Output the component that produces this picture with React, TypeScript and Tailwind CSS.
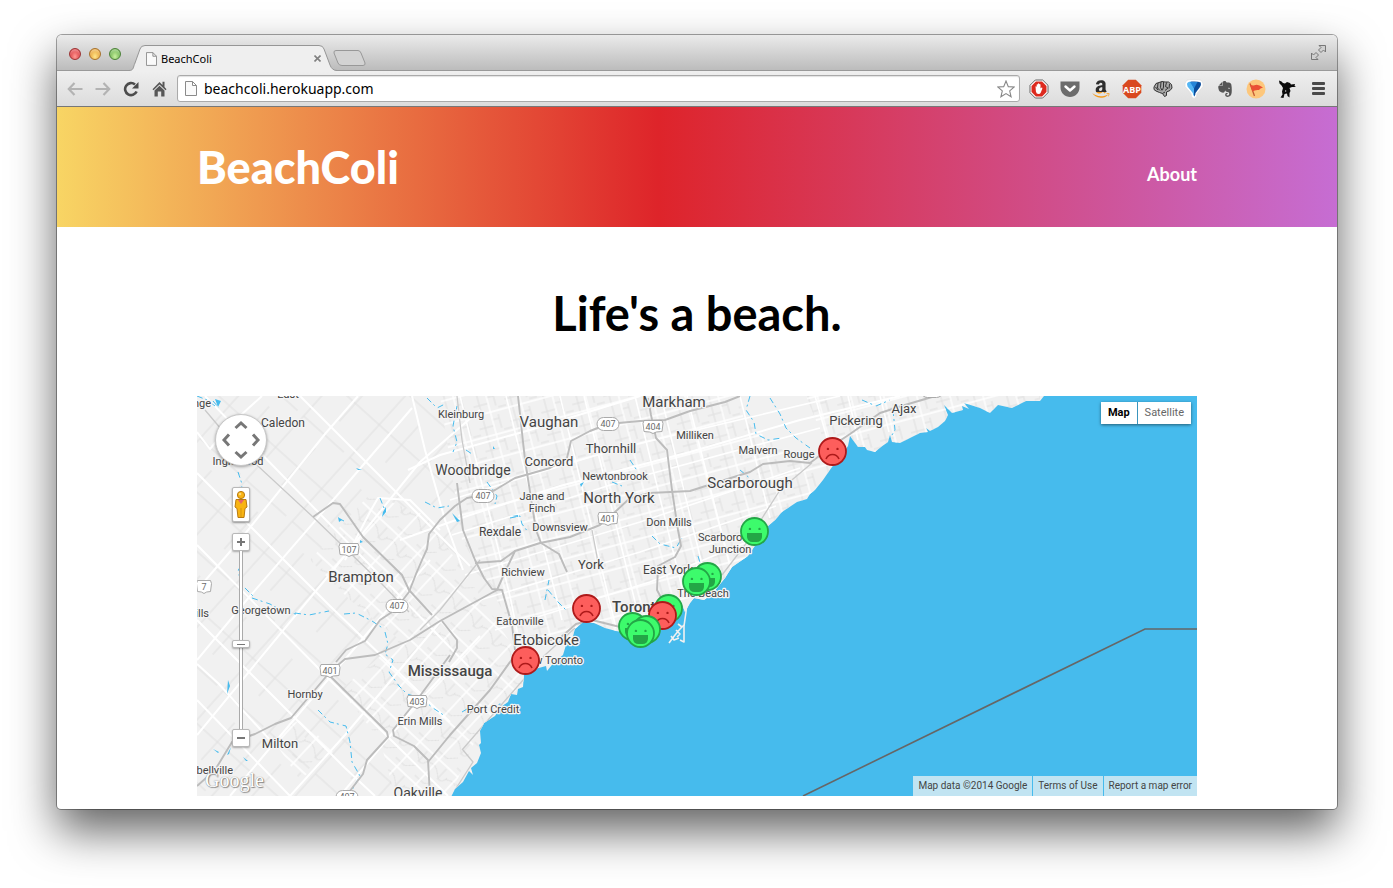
import React from "react";
import { FaAmazon } from "react-icons/fa";
import { SiEvernote } from "react-icons/si";

/* ---------- Map data ---------- */

const COAST =
  "M190 390H1046L1044 396L1040 401L1026 401L1012 408L998 405L990 413L980 408L964 403L969 409L962 406L963 410L952 413L944 405L948 415L945 421L938 427L930 431L926 428L928 432L920 433L910 438L900 443L892 442L890 435L888 442L881 447L875 452L867 450L865 447L858 447L850 436L848 446L840 458L832 467L823 480L815 490L810 494L807 499L797 502L782 512L775 520L768 526L758 541L752 550L748 556L732 567L725 578L712 594L704 600L694 598L690 603L685 612L682 604L674 622L662 627L650 632L634 634L616 631L605 628L594 623L583 622L575 629L573 636L572 642L566 645L563 655L555 661L547 671L546 666L535 669L524 674L523 687L518 689L517 695L511 694L508 702L501 707L495 716L484 723L480 731L481 743L479 745L481 753L477 763L471 768L473 775L469 771L463 782L455 789L451 797H190Z";

const RURAL = [
  "M205 396L400 596L470 668",
  "M197 432L210 449L230 425L262 396",
  "M300 396L470 566",
  "M197 473L330 606L450 722",
  "M197 545L330 680L448 796",
  "M197 620L345 768L375 796",
  "M197 700L290 796",
  "M197 590L240 540L325 434L358 396",
  "M197 660L245 602L340 492L412 408",
  "M197 735L290 622L330 574L420 462L480 410",
  "M230 796L270 748L370 630L430 560",
  "M290 796L345 735L440 622",
  "M340 796L420 700L480 636",
  "M412 396L425 450L445 520L463 570",
  "M408 470L440 455L530 430L640 396",
  "M400 540L470 515L560 486L690 452L800 420L900 396",
  "M197 664L218 683L270 740",
  "M345 560L371 510L378 498L410 500L440 530",
];

const CITY_LINES = [
  "M460 396L510 596L520 645",
  "M506 396L562 620",
  "M560 396L616 628",
  "M584 396L640 622",
  "M635 396L684 596",
  "M661 396L707 585",
  "M687 396L730 566",
  "M740 396L770 518",
  "M815 396L829 445",
  "M848 396L858 440",
  "M880 396L889 432",
  "M450 500L620 448L840 396",
  "M452 535L620 482L820 428",
  "M465 575L640 522L800 468",
  "M480 600L640 552L776 506",
  "M495 630L650 582L752 540",
];

const ROADS = [
  "M205 410L232 442L313 517L380 582L409 612",
  "M457 396L462 440L470 483",
  "M592 530L598 562",
  "M722 575L745 545L780 490L812 463",
  "M480 560L440 610L420 630",
  "M463 750L473 762L455 790",
  "M462 750L495 712L545 655L575 628",
];

const HIGHWAYS = [
  "M313 517L333 503L340 504L363 537L402 575L409 590L432 615",
  "M336 662L346 650L365 641L380 620L395 610L409 592L416 574L422 560L427 549L429 534L440 520L455 506L467 498L483 495L495 490L515 478L550 468L567 458L571 441L590 431L608 424L640 421L665 420L690 411L725 402L740 396",
  "M197 786L215 770L232 742L255 734L275 724L291 718L330 672L345 659L375 655L410 640L440 621L497 590L505 572L515 551L540 543L570 537L600 525L615 512L630 498L650 493L690 491L718 482L750 472L763 464L790 461L810 463L832 446L850 434L880 413L905 405L932 397",
  "M330 676L387 732L388 737L367 760L363 774L346 796",
  "M450 655L417 700L393 730L394 736L414 746L428 760L430 796",
  "M428 762L450 735L490 690L515 655L535 643L560 638L576 624L592 620L620 627L640 618L668 612",
  "M518 396L525 460L536 530L541 543L559 554L567 572",
  "M457 483L463 530L475 560L484 578L492 589L502 590L512 625L515 650",
  "M475 563L501 561L515 551",
  "M442 621L457 640L457 648L449 662",
  "M648 398L651 415L656 438L667 450L672 490L678 530L681 546L675 557L658 566L657 590L665 605",
];

const CREEKS = [
  "M197 396l10 4 8 6M213 401l6 7M238 472l4 12-1 10M241 560l-3 12 5 14 10 10M252 598l18 6 14 8 12 2M295 613l14 2 20 -4M344 614l12-1 16 8 12 8M385 632l3 12-3 10 8 6-4 12 10 14 8 8 14 4 12 10 12 8M318 710l12 12 16 4 4 16 2 20 8 14-8 14-14 6",
  "M427 398l10 10 8-4M457 406l-4 20 4 16-4 10M425 502l12 6 12-2M466 450l6 4M487 482l10 14-2 8M510 518l10-2 2 8 6 8M545 600l4-20M548 590l10 12 10 10M462 712l10-6 16 2 12-4 10 2",
  "M750 396l-4 14 8 12 2 12 12 6 14-2M770 398l10 16 6 14 10 10 14 10M862 400l14 6 14-6M893 410l2 20-6 10M740 470l12 10 16 4M652 536l8 8 16 4 6-10M612 482l10 4M698 556l6 20M630 460l8 12",
  "M380 498l4 10M340 519l4 2",
];

type Anchor = "start" | "middle" | "end";
const LABELS: [string, number, number, number, Anchor, number?][] = [
  ["Markham", 674, 407, 15, "middle"],
  ["Kleinburg", 461, 418, 11, "middle"],
  ["Vaughan", 549, 427, 15, "middle"],
  ["Caledon", 283, 427, 12, "middle"],
  ["East", 288, 398, 11, "middle"],
  ["Orange", 211, 407, 11, "end"],
  ["Inglewood", 238, 465, 11, "middle"],
  ["Thornhill", 611, 453, 13, "middle"],
  ["Concord", 549, 466, 13, "middle"],
  ["Woodbridge", 473, 475, 14, "middle"],
  ["Newtonbrook", 615, 480, 11, "middle"],
  ["Jane and", 542, 500, 11, "middle"],
  ["Finch", 542, 512, 11, "middle"],
  ["North York", 619, 503, 15, "middle"],
  ["Milliken", 695, 439, 11, "middle"],
  ["Malvern", 758, 454, 11, "middle"],
  ["Rouge", 799, 458, 11, "middle"],
  ["Pickering", 856, 425, 13, "middle"],
  ["Ajax", 904, 413, 13, "middle"],
  ["Scarborough", 750, 488, 15, "middle"],
  ["Don Mills", 669, 526, 11, "middle"],
  ["Rexdale", 500, 536, 12, "middle"],
  ["Downsview", 560, 531, 11, "middle"],
  ["Scarborough", 698, 541, 11, "start"],
  ["Junction", 730, 553, 11, "middle"],
  ["York", 591, 569, 13, "middle"],
  ["East York", 643, 574, 12, "start"],
  ["Richview", 523, 576, 11, "middle"],
  ["The Beach", 703, 597, 11, "middle"],
  ["Toronto", 612, 612, 15, "start", 500],
  ["Eatonville", 520, 625, 11, "middle"],
  ["Etobicoke", 546, 645, 15, "middle"],
  ["New Toronto", 583, 664, 11, "end"],
  ["Mississauga", 450, 676, 15, "middle", 500],
  ["Port Credit", 493, 713, 11, "middle"],
  ["Erin Mills", 420, 725, 11, "middle"],
  ["Hornby", 305, 698, 11, "middle"],
  ["Milton", 280, 748, 13, "middle"],
  ["Brampton", 361, 582, 15, "middle"],
  ["Georgetown", 261, 614, 11, "middle"],
  ["Hills", 209, 617, 11, "end"],
  ["Campbellville", 233, 774, 11, "end"],
  ["Oakville", 418, 798, 14, "middle"],
];

const SHIELDS: [string, number, number, boolean][] = [
  ["407", 608, 424, true],
  ["404", 653, 427, false],
  ["407", 483, 496, true],
  ["401", 608, 519, false],
  ["107", 349, 550, false],
  ["7", 204, 587, false],
  ["407", 397, 606, true],
  ["401", 330, 671, false],
  ["403", 417, 702, false],
  ["407", 347, 797, true],
  ["2", 932, 391, true],
];

const MARKERS: [number, number, boolean][] = [
  [832, 451, false],
  [754, 531, true],
  [707, 576, true],
  [696, 581, true],
  [586, 608, false],
  [668, 608, true],
  [662, 615, false],
  [632, 626, true],
  [646, 629, true],
  [640, 633, true],
  [525, 660, false],
];

function Marker({ x, y, happy }: { x: number; y: number; happy: boolean }) {
  const dark = happy ? "#23a646" : "#ae1a1a";
  return (
    <g transform={`translate(${x + 0.5} ${y + 0.5})`}>
      <circle r="13.5" fill={happy ? "#3dfb6c" : "#fd5e5c"} stroke={dark} strokeWidth="1.8" />
      <circle cx="-4.6" cy="-2.6" r="1.2" fill={dark} />
      <circle cx="5" cy="-2.6" r="1.2" fill={dark} />
      {happy ? (
        <path d="M-7.5 1.5H7.5V5.5Q7 10.5 2 10.5H-2Q-7 10.5-7.5 5.5Z" fill={dark} />
      ) : (
        <path d="M-6.5 7.5Q-4.5 3 0 3T6.5 7.5" fill="none" stroke={dark} strokeWidth="1.6" />
      )}
    </g>
  );
}

function Shield({ text, x, y, round }: { text: string; x: number; y: number; round: boolean }) {
  const w = round ? 22 : text.length > 1 ? 18 : 13;
  return (
    <g>
      {round ? (
        <rect x={x - w / 2} y={y - 6.5} width={w} height="13" rx="6.5" fill="#fff" stroke="#aaa" />
      ) : (
        <path
          d={`M${x - w / 2} ${y - 6.5}h${w}l1 3l-1 8q-${w / 2 - 2} 0-${w / 2} 2q-2-2-${w / 2}-2l-1-8z`}
          fill="#fff"
          stroke="#aaa"
        />
      )}
      <text x={x} y={y + 3} textAnchor="middle" fontSize="9" fill="#6b6b6b">
        {text}
      </text>
    </g>
  );
}

function MapCanvas() {
  return (
    <svg
      className="block h-full w-full"
      viewBox="197 396 1000 400"
      preserveAspectRatio="xMidYMid slice"
      fontFamily="Roboto, sans-serif"
      role="img"
      aria-label="Map of Toronto beaches"
    >
      <defs>
        <clipPath id="land">
          <path d={COAST} />
        </clipPath>
        <pattern id="rural" width="86" height="62" patternUnits="userSpaceOnUse" patternTransform="rotate(-48)">
          <path d="M0 8H86M24 0V62M0 38H50M66 8V62" fill="none" stroke="#e0e0e0" strokeWidth="1" />
        </pattern>
        <pattern id="suburb" width="34" height="26" patternUnits="userSpaceOnUse" patternTransform="rotate(-47)">
          <path d="M6 0Q12 8 4 16T8 26M22 0V12L30 20M0 19H14" fill="none" stroke="#e0e0e0" strokeWidth="1" />
          <path d="M0 7H34M16 0V26" fill="none" stroke="#fff" strokeWidth="1.6" />
        </pattern>
        <pattern id="city" width="32" height="23" patternUnits="userSpaceOnUse" patternTransform="rotate(-15)">
          <path d="M6 0V23M22 0V14M0 10H15M24 16H32M15 4H22" fill="none" stroke="#dfdfdf" strokeWidth="1" />
          <path d="M0 19H32M15 0V23" fill="none" stroke="#fff" strokeWidth="1.3" />
        </pattern>
      </defs>
      <rect x="197" y="396" width="1000" height="400" fill="#46bbed" />
      <g clipPath="url(#land)">
        <rect x="197" y="396" width="860" height="400" fill="#f1f1f1" />
        <rect x="197" y="396" width="300" height="400" fill="url(#rural)" />
        <path
          d="M370 494L425 515L470 580L515 650L525 680L480 730L450 796H395L380 740L340 690L400 640L350 600L310 560Z"
          fill="#f1f1f1"
        />
        <path
          d="M370 494L425 515L470 580L515 650L525 680L480 730L450 796H395L380 740L340 690L400 640L350 600L310 560Z"
          fill="url(#suburb)"
        />
        <path d="M270 735L300 720L335 750L300 780Z" fill="url(#suburb)" />
        <path d="M440 396H740L780 520L690 620H520L462 540Z" fill="#f1f1f1" />
        <path d="M440 396H1040V440L880 450L780 520L690 640H520L462 540Z" fill="url(#city)" />
        <path d="M738 396H806L828 450L790 456L744 420Z" fill="#f1f1f1" />
        <g fill="none" stroke="#fff" strokeWidth="2" strokeLinejoin="round">
          {RURAL.map((d) => (
            <path key={d} d={d} />
          ))}
        </g>
        <g fill="none" stroke="#fff" strokeWidth="1.6">
          {CITY_LINES.map((d) => (
            <path key={d} d={d} />
          ))}
        </g>
        <g fill="none" stroke="#46bbed" strokeWidth="1" strokeDasharray="6 3 2 4">
          {CREEKS.map((d) => (
            <path key={d} d={d} />
          ))}
        </g>
        <g fill="#46bbed">
          <path d="M383 512l3-5v5l-4 5zM338 517l4 3-3 2zM215 399l6 2-3 6zM228 680l2 6-3 8zM231 747l-4 8 2-1zM213 749l6 3-1 1zM243 757l5 4-2 0zM452 513l8 8-3 1zM512 516l6-1v2zM580 484l4-2-3 5zM493 446l2 3-2 0zM360 540l3 2-3 1zM356 468l6 2-4 0z" />
        </g>
        <g fill="none" stroke="#cacaca" strokeWidth="1.3" strokeLinejoin="round">
          {ROADS.map((d) => (
            <path key={d} d={d} />
          ))}
        </g>
        <g fill="none" stroke="#bcbcbc" strokeWidth="1.9" strokeLinejoin="round">
          {HIGHWAYS.map((d) => (
            <path key={d} d={d} />
          ))}
        </g>
      </g>
      <g fill="none" stroke="#f1f1f1" strokeWidth="1.6" strokeLinejoin="round">
        <path d="M687 600L686 612L684 626L684 642L680 640" />
        <path d="M669 643L675 635L680 629L684 625M671 636L674 640L679 638M676 630L680 634L677 637M682 627L678 624" />
      </g>
      <path d="M803 796L1145 629H1197" fill="none" stroke="#666" strokeWidth="1.6" />
      {SHIELDS.map(([t, x, y, r]) => (
        <Shield key={`${t}${x}${y}`} text={t} x={x} y={y} round={r} />
      ))}
      <g fill="#444" stroke="#f5f5f5" strokeWidth="2.5" strokeLinejoin="round" paintOrder="stroke">
        {LABELS.map(([t, x, y, s, a, w]) => (
          <text key={`${t}${y}`} x={x} y={y} fontSize={s} textAnchor={a} fontWeight={w ?? 400}>
            {t}
          </text>
        ))}
      </g>
      {MARKERS.map(([x, y, h]) => (
        <Marker key={`${x}-${y}`} x={x} y={y} happy={h} />
      ))}
    </svg>
  );
}

/* ---------- Map controls ---------- */

function PanControl() {
  return (
    <div className="relative size-[52px] rounded-full border border-[#c8c8c8] bg-white shadow-[0_1px_3px_rgba(0,0,0,0.35)]">
      <svg className="absolute inset-0 size-full" viewBox="0 0 50 50" fill="none" stroke="#777" strokeWidth="3">
        <path d="M19.500 13L25 8L30.500 13M19.500 37L25 42L30.500 37M13 19.500L8 25L13 30.500M37 19.500L42 25L37 30.500" />
      </svg>
      <button type="button" aria-label="Pan up" className="absolute top-0 left-4 size-4" />
      <button type="button" aria-label="Pan down" className="absolute bottom-0 left-4 size-4" />
      <button type="button" aria-label="Pan left" className="absolute top-4 left-0 size-4" />
      <button type="button" aria-label="Pan right" className="absolute top-4 right-0 size-4" />
    </div>
  );
}

function MapControls() {
  return (
    <div className="absolute top-[18px] left-[18px] flex w-[52px] flex-col items-center">
      <PanControl />
      <button
        type="button"
        aria-label="Street View"
        className="mt-[21px] flex h-[35px] w-[18px] items-center justify-center rounded-xs border border-[#b8b8b8] bg-white shadow-[0_1px_2px_rgba(0,0,0,0.4)]"
      >
        <svg width="14" height="29" viewBox="0 0 14 29">
          <path d="M2 9.500L12 9.500L13 17L11 18.500L10 27.500H4L3 18.500L1 17Z" fill="#f8b413" stroke="#b97a10" />
          <path d="M7 18V27" stroke="#c98a10" strokeWidth=".7" />
          <path d="M4 10h6l-3 4z" fill="#e8646a" />
          <circle cx="7" cy="5" r="3.600" fill="#f8b413" stroke="#b97a10" />
          <circle cx="6" cy="4" r="1.300" fill="#fdd977" />
        </svg>
      </button>
      <button
        type="button"
        aria-label="Zoom in"
        className="mt-[11px] flex size-[18px] items-center justify-center rounded-xs border border-[#b8b8b8] bg-white shadow-[0_1px_2px_rgba(0,0,0,0.3)]"
      >
        <svg width="8" height="8" viewBox="0 0 8 8" stroke="#777" strokeWidth="2">
          <path d="M0 4H8M4 0V8" />
        </svg>
      </button>
      <div className="relative flex h-[178px] w-[18px] justify-center">
        <div className="h-full w-1 border-x border-[#aaa] bg-white" />
        <input
          type="range"
          min={0}
          max={21}
          defaultValue={10}
          aria-label="Zoom level"
          className="absolute inset-0 m-0 h-full w-[18px] appearance-none bg-transparent [direction:rtl] [writing-mode:vertical-lr] [&::-webkit-slider-thumb]:h-2 [&::-webkit-slider-thumb]:w-[18px] [&::-webkit-slider-thumb]:appearance-none [&::-webkit-slider-thumb]:rounded-xs [&::-webkit-slider-thumb]:border [&::-webkit-slider-thumb]:border-[#b8b8b8] [&::-webkit-slider-thumb]:bg-[linear-gradient(#777,#777)] [&::-webkit-slider-thumb]:bg-[length:8px_1px] [&::-webkit-slider-thumb]:bg-center [&::-webkit-slider-thumb]:bg-no-repeat [&::-webkit-slider-thumb]:bg-white [&::-webkit-slider-thumb]:shadow-[0_1px_2px_rgba(0,0,0,0.3)]"
        />
      </div>
      <button
        type="button"
        aria-label="Zoom out"
        className="flex size-[18px] items-center justify-center rounded-xs border border-[#b8b8b8] bg-white shadow-[0_1px_2px_rgba(0,0,0,0.3)]"
      >
        <svg width="8" height="8" viewBox="0 0 8 8" stroke="#777" strokeWidth="2">
          <path d="M0 4H8" />
        </svg>
      </button>
    </div>
  );
}

/* ---------- Browser chrome ---------- */

function PageIcon({ className }: { className: string }) {
  return (
    <svg className={className} viewBox="0 0 12 15" fill="#fafafa" stroke="#8a8a8a">
      <path d="M.5 .5H7.500L11.500 4.500V14.500H.5ZM7.500 .5V4.500H11.500" />
    </svg>
  );
}

function TabStrip() {
  return (
    <div className="flex h-9 items-end border-b border-[#999] bg-linear-to-b from-[#ebebeb] to-[#bcbcbc] pl-3">
      <div className="flex h-full items-center gap-2 pt-[2px]">
        <button type="button" aria-label="Close window" className="size-3 rounded-full border border-[#9c3434] bg-radial-[at_50%_75%] from-[#ff9a94] to-[#d01f28] shadow-[inset_0_2px_2px_rgba(255,255,255,0.35)]" />
        <button type="button" aria-label="Minimize window" className="size-3 rounded-full border border-[#a8722c] bg-radial-[at_50%_75%] from-[#ffe68c] to-[#e08c1c] shadow-[inset_0_2px_2px_rgba(255,255,255,0.35)]" />
        <button type="button" aria-label="Zoom window" className="size-3 rounded-full border border-[#4c8238] bg-radial-[at_50%_75%] from-[#c8f0a0] to-[#52a136] shadow-[inset_0_2px_2px_rgba(255,255,255,0.35)]" />
      </div>
      <div className="relative -mb-px ml-2 h-[26px] w-[208px]">
        <svg className="absolute inset-0 size-full" viewBox="0 0 208 26">
          <path d="M0 25.500C5 25.500 4 22 6 18L11 4Q12 .5 16 .5H190Q194 .5 195 4L201 20Q203 25.500 208 25.500V26H0Z" fill="#efefef" />
          <path d="M0 25.500C5 25.500 4 22 6 18L11 4Q12 .5 16 .5H190Q194 .5 195 4L201 20Q203 25.500 208 25.500" fill="none" stroke="#969696" />
        </svg>
        <div className="relative flex h-full items-center pt-px pr-[15px] pl-[17px]">
          <PageIcon className="h-[14px] w-[11px]" />
          <span className="ml-1 flex-1 text-[11px] leading-4 text-black">BeachColi</span>
          <button type="button" aria-label="Close tab" className="flex size-[9px] items-center justify-center">
            <svg width="7" height="7" viewBox="0 0 7 7" stroke="#808080" strokeWidth="1.600">
              <path d="M.5 .5L6.500 6.500M6.500 .5L.5 6.500" />
            </svg>
          </button>
        </div>
      </div>
      <button type="button" aria-label="New tab" className="mb-[3px] -ml-1">
        <svg width="33" height="17" viewBox="0 0 33 17" className="block">
          <path d="M3 .5H25Q27 .5 28 3L32 13Q32.500 15.500 30 15.500H9Q6 15.500 5 13L1 3Q.5 .5 3 .5Z" fill="#d3d3d3" stroke="#989898" />
        </svg>
      </button>
      <button type="button" aria-label="Full screen" className="mr-[11px] mb-[10px] ml-auto">
        <svg width="15" height="15" viewBox="0 0 15 15" fill="#d0d0d0" stroke="#777" className="block">
          <path d="M8 .5H14.500V7L12.500 5L10 7.500L7.500 5L10 2.500ZM.5 8L2.500 10L5 7.500L7.500 10L5 12.500L7 14.500H.5Z" />
        </svg>
      </button>
    </div>
  );
}

function BlockIcon() {
  return (
    <svg width="20" height="20" viewBox="0 0 20 20">
      <path d="M6.300 1H13.700L19 6.300V13.700L13.700 19H6.300L1 13.700V6.300Z" fill="#fff" stroke="#666" />
      <path d="M6.900 2.500H13.100L17.500 6.900V13.100L13.100 17.500H6.900L2.500 13.100V6.900Z" fill="#dd2a1e" />
      <path d="M6.500 7.500Q7.300 7 7.700 8V5.500Q8.300 4.800 8.900 5.500V4.700Q9.500 4 10.200 4.700V5.300Q11 4.700 11.500 5.500V9.500L12.500 8.500Q13.700 8.500 13.300 9.700L11.800 13.500Q11.300 15 9.500 15Q7.300 15 6.900 12.500Z" fill="#fff" />
    </svg>
  );
}

function PocketIcon() {
  return (
    <svg width="20" height="18" viewBox="0 0 20 18">
      <path d="M.5 1.500H19.500V7.500C19.500 13 15 17 10 17S.5 13 .5 7.500Z" fill="#6c6c6c" />
      <path d="M5.500 6.500L10 10.500L14.500 6.500" fill="none" stroke="#fff" strokeWidth="2.500" strokeLinecap="round" strokeLinejoin="round" />
    </svg>
  );
}

function AmazonIcon() {
  return (
    <span className="relative block size-5 overflow-hidden">
      <FaAmazon className="absolute inset-0 size-5 text-[#2e2e2e] [clip-path:inset(0_0_33%_0)]" />
      <FaAmazon className="absolute inset-0 size-5 text-[#f49a1c] [clip-path:inset(67%_0_0_0)]" />
    </span>
  );
}

function AbpIcon() {
  return (
    <svg width="20" height="20" viewBox="0 0 20 20">
      <path d="M6.200 .7H13.800L19.300 6.200V13.800L13.800 19.300H6.200L.7 13.800V6.200Z" fill="#d9481f" />
      <text x="10" y="14" textAnchor="middle" fontSize="10" fontWeight="700" fontFamily="Open Sans, sans-serif" className="[font-size:9px]" fill="#fff">
        ABP
      </text>
    </svg>
  );
}

function FistIcon() {
  return (
    <svg width="20" height="20" viewBox="0 0 20 20" fill="#a8a8a8" stroke="#333" strokeWidth="1" strokeLinejoin="round">
      <path d="M1 8L3 4.500L6 3.500L9 2.500L12 3L15.500 3L18.500 5.500L19 9L17 11.500L13.500 13L13.500 16.500L11.500 17.500L9.500 14.500L6.500 13.500L3 12L1 10.500Z" />
      <path d="M5 4L4.500 9L7 11.500M8 3L7.500 8.500L9 11.500M10.500 3V8L9.500 11M13.500 3.500L12.500 7.500L15 9L12 11.500M16.500 5L16 9.500M2.500 8L5 11M9.500 14.500L12 13" fill="none" />
    </svg>
  );
}

function BalloonIcon() {
  return (
    <svg width="20" height="20" viewBox="0 0 20 20">
      <path d="M10 19.500Q7 19 7 14.500L1 7.500Q0 1 6 .5H14Q20 1 19 7.500L13 14.500Q13 19 10 19.500Z" fill="#fff" stroke="#ddd" strokeWidth=".7" />
      <path d="M3 5Q3.500 2.500 7 2.500L10.500 9V17.500Q8.800 17 8.800 14L3.500 7.500Z" fill="#55b6f4" />
      <path d="M7 2.500Q14 2 16.800 3.500Q17.500 6 16 8L11.500 14Q11.500 17 10 17.500V9Z" fill="#0c4d9c" />
      <path d="M6 3L10 9.500L13.500 3Z" fill="#2585d8" />
    </svg>
  );
}

function FlagIcon() {
  return (
    <svg width="20" height="20" viewBox="0 0 20 20">
      <circle cx="10" cy="10" r="9.500" fill="#fdc77c" />
      <path d="M4 4.500L8.500 17" stroke="#c55a33" strokeWidth="1.300" />
      <path d="M4 5.500Q7 7 9.500 6T17 8.500Q14 9 13 11Q9 10.500 6.500 12.500Z" fill="#ea5035" />
    </svg>
  );
}

function CreatureIcon() {
  return (
    <svg width="20" height="20" viewBox="0 0 20 20" fill="#0a0a0a">
      <path d="M2 1.500L4.500 2.500L6 4L8 4.500L10 3L13 4L14 5.500L18 5L17.500 7L19 8L15 8L12.500 9L13.500 12L12.500 14L12.500 18.500L10.500 17L10 14.500L7.500 15L6.500 19L3.500 18.500L5.500 15.500L5 12.500L6 9L4.500 6.500L2.500 4.500Z" />
      <path d="M8 11.500h1.200v1H8z" fill="#fff" />
    </svg>
  );
}

const EXTENSIONS: [string, React.ReactNode][] = [
  ["AdBlock", <BlockIcon />],
  ["Pocket", <PocketIcon />],
  ["Amazon", <AmazonIcon />],
  ["Adblock Plus", <AbpIcon />],
  ["Fist", <FistIcon />],
  ["Balloon", <BalloonIcon />],
  ["Evernote", <SiEvernote className="size-4 text-[#555]" />],
  ["Flag", <FlagIcon />],
  ["Creature", <CreatureIcon />],
];

function Toolbar() {
  return (
    <div className="flex h-9 items-center border-b border-[#777] bg-linear-to-b from-[#efefef] to-[#dcdcdc] pr-[9px] pl-2">
      <div className="flex items-center gap-2">
        <button type="button" aria-label="Back" className="flex size-5 items-center justify-center">
          <svg width="16" height="14" viewBox="0 0 16 14" fill="none" stroke="#b3b3b3" strokeWidth="2.200">
            <path d="M7.500 1L1.800 7L7.500 13M2 7H15.500" />
          </svg>
        </button>
        <button type="button" aria-label="Forward" className="flex size-5 items-center justify-center">
          <svg width="16" height="14" viewBox="0 0 16 14" fill="none" stroke="#b3b3b3" strokeWidth="2.200">
            <path d="M8.500 1L14.200 7L8.500 13M14 7H.5" />
          </svg>
        </button>
        <button type="button" aria-label="Reload" className="flex size-5 items-center justify-center">
          <svg width="16" height="16" viewBox="0 0 16 16">
            <path d="M13.600 10.500A6 6 0 1 1 12 3.500" fill="none" stroke="#4c4c4c" strokeWidth="2.600" />
            <path d="M15.500 1V7.500H9Z" fill="#4c4c4c" />
          </svg>
        </button>
        <button type="button" aria-label="Home" className="flex size-5 items-center justify-center">
          <svg width="15" height="16" viewBox="0 0 15 16" fill="#575757">
            <path d="M7.500 1L.5 8.200L1.500 9.300L7.500 3.500L13.500 9.300L14.500 8.200L12.500 6V.8H10.500V4Z" />
            <path d="M2.500 9.500L7.500 4.800L12.500 9.500V15.500H9.200V10.500H5.800V15.500H2.500Z" />
          </svg>
        </button>
      </div>
      <div className="ml-2 flex h-[27px] flex-1 items-center rounded-[3px] border border-[#aaa] bg-white pr-1 pl-[7px] shadow-[inset_0_1px_1px_rgba(0,0,0,0.12)]">
        <PageIcon className="h-[15px] w-[12px]" />
        <input
          type="text"
          aria-label="Address"
          defaultValue="beachcoli.herokuapp.com"
          className="ml-[7px] min-w-0 flex-1 bg-transparent text-sm leading-5 text-black outline-none"
        />
        <button type="button" aria-label="Bookmark this page">
          <svg width="18" height="18" viewBox="0 0 18 18" fill="#fff" stroke="#888" strokeWidth="1.100" className="block">
            <path d="M9 1L11.300 6.600L17.200 7L12.700 10.900L14.100 16.800L9 13.600L3.900 16.800L5.300 10.900L.8 7L6.700 6.600Z" />
          </svg>
        </button>
      </div>
      <div className="ml-[9px] flex items-center gap-[11px]">
        {EXTENSIONS.map(([name, icon]) => (
          <button key={name} type="button" aria-label={name} className="flex size-5 items-center justify-center">
            {icon}
          </button>
        ))}
        <button type="button" aria-label="Menu" className="flex size-5 items-center justify-center">
          <svg width="13" height="13" viewBox="0 0 13 13" fill="#4a4a4a">
            <rect width="13" height="3" rx="1" />
            <rect y="5" width="13" height="3" rx="1" />
            <rect y="10" width="13" height="3" rx="1" />
          </svg>
        </button>
      </div>
    </div>
  );
}

/* ---------- Page ---------- */

export default function App() {
  return (
    <div className="min-h-screen bg-white pt-[35px] pr-14 pb-[79px] pl-[57px] font-['Noto_Sans',sans-serif]">
      <div className="overflow-hidden rounded-t-[5px] rounded-b-sm bg-white shadow-[0_0_0_1px_rgba(0,0,0,0.35),0_22px_46px_rgba(0,0,0,0.62)]">
        <TabStrip />
        <Toolbar />
        <header className="h-[120px] bg-[linear-gradient(90deg,#f8d564_0%,#e86c40_28%,#de242a_47%,#c66dd3_100%)] px-5 font-['Lato',sans-serif] text-white">
          <div className="mx-auto flex h-full max-w-[1000px] items-center justify-between">
            <a href="#home" className="text-[45px] leading-none font-black">
              BeachColi
            </a>
            <nav>
              <a href="#about" className="block pt-[14px] text-lg leading-6 font-bold">
                About
              </a>
            </nav>
          </div>
        </header>
        <main className="mx-auto max-w-[1000px] pt-14 pb-[13px]">
          <h1 className="text-center font-['Lato',sans-serif] text-[47px] leading-[60px] font-bold text-black">
            Life's a beach.
          </h1>
          <div className="relative mt-[53px] h-[400px] overflow-hidden">
            <MapCanvas />
            <MapControls />
            <div className="absolute top-[6px] right-[6px] flex h-[22px] bg-white font-['Roboto',sans-serif] text-[11px] shadow-[0_1px_3px_rgba(0,0,0,0.5)]">
              <button type="button" className="border-r border-[#3a95bd] px-[7px] font-bold text-black">
                Map
              </button>
              <button type="button" className="px-[7px] text-[#666]">
                Satellite
              </button>
            </div>
            <div className="absolute bottom-1 left-2 font-['Liberation_Serif',serif] text-xl leading-6 text-white [text-shadow:0_0_1px_#777,1px_1px_1px_#888]">
              Google
            </div>
            <div className="absolute right-0 bottom-0 flex gap-px font-['Roboto',sans-serif] text-[10px] leading-5 text-[#444]">
              <span className="bg-[#c1e4f2] px-[5px]">Map data ©2014 Google</span>
              <a href="#terms" className="bg-[#c1e4f2] px-[5px]">
                Terms of Use
              </a>
              <a href="#report" className="bg-[#c1e4f2] px-[5px]">
                Report a map error
              </a>
            </div>
          </div>
        </main>
      </div>
    </div>
  );
}
